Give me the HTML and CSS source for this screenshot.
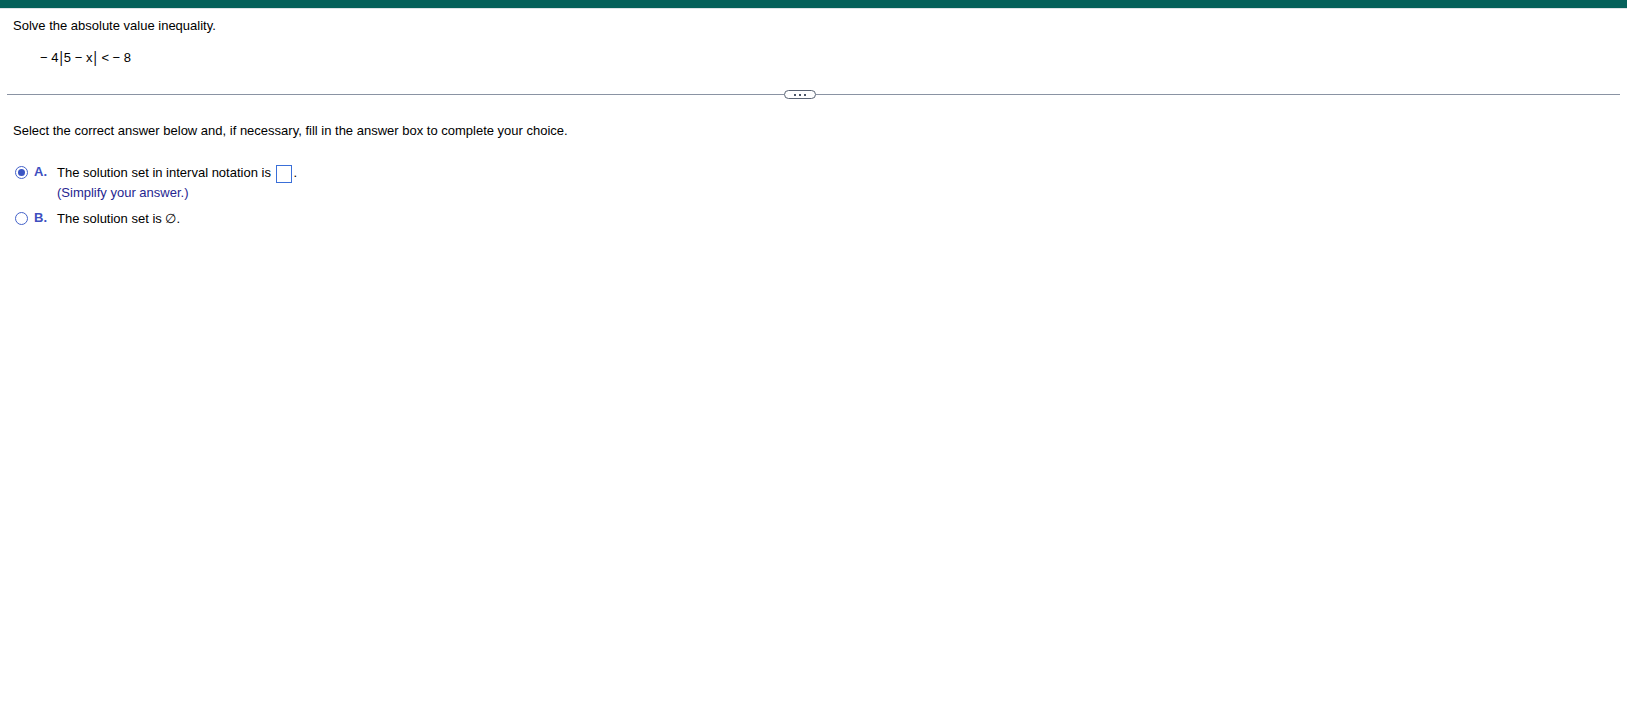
FILE: index.html
```html
<!DOCTYPE html>
<html>
<head>
<meta charset="utf-8">
<link rel="stylesheet" href="styles.css">
</head>
<body>
<div class="topbar"></div>
<div class="question">
  <div class="prompt">Solve the absolute value inequality.</div>
  <div class="equation"><span class="op">−</span> 4<span class="bar">|</span>5 <span class="op">−</span> x<span class="bar">|</span> &lt; <span class="op">−</span> 8</div>
</div>
<div class="divider">
  <span class="rule rule-left"></span>
  <button class="pill" aria-label="more"><span class="dot"></span><span class="dot"></span><span class="dot"></span></button>
  <span class="rule"></span>
</div>
<div class="answer">
  <div class="instructions">Select the correct answer below and, if necessary, fill in the answer box to complete your choice.</div>
  <div class="options">
    <div class="option">
      <span class="radio checked"></span>
      <span class="letter">A.</span>
      <div class="body">
        <div class="line">The solution set in interval notation is <span class="box"></span>.</div>
        <div class="hint">(Simplify your answer.)</div>
      </div>
    </div>
    <div class="option">
      <span class="radio"></span>
      <span class="letter">B.</span>
      <div class="body">
        <div class="line">The solution set is ∅.</div>
      </div>
    </div>
  </div>
</div>
</body>
</html>
```
FILE: styles.css
```css
html, body {
  margin: 0;
  padding: 0;
  background: #ffffff;
}
body {
  font-family: "Liberation Sans", Arial, sans-serif;
  font-size: 13px;
  color: #000000;
}
.topbar {
  height: 8px;
  background: #05605a;
  border-bottom: 1px solid #dfe3e6;
}
.question {
  padding: 9px 13px 0 13px;
}
.prompt {
  line-height: 16px;
}
.equation {
  margin-top: 16px;
  padding-left: 27px;
  line-height: 16px;
}
.equation .bar {
  display: inline-block;
  margin: 0 1px;
  transform: scaleY(1.3);
}
.divider {
  display: flex;
  align-items: center;
  margin: 24px 7px 0 7px;
}
.rule {
  flex: 1;
  height: 1px;
  background: #8a93a3;
}
.rule-left {
  flex: 0 0 777px;
}
.pill {
  width: 32px;
  height: 9px;
  border: 1px solid #5a6475;
  border-radius: 5px;
  background: #fff;
  padding: 0;
  display: flex;
  align-items: center;
  justify-content: center;
  gap: 3px;
  box-sizing: border-box;
}
.dot {
  width: 2px;
  height: 2px;
  background: #4a5466;
}
.answer {
  padding: 24px 13px 0 13px;
}
.instructions {
  line-height: 16px;
}
.options {
  margin-top: 24px;
  display: flex;
  flex-direction: column;
  gap: 7px;
}
.option {
  display: flex;
  align-items: flex-start;
}
.radio {
  width: 13px;
  height: 13px;
  border: 1px solid #4462c9;
  border-radius: 50%;
  box-sizing: border-box;
  margin: 3px 0 0 2px;
  display: flex;
  align-items: center;
  justify-content: center;
}
.radio.checked::after {
  content: "";
  width: 7px;
  height: 7px;
  border-radius: 50%;
  background: #3a55c4;
}
.letter {
  color: #3e4fbf;
  font-weight: bold;
  margin-left: 6px;
  width: 23px;
  line-height: 18px;
}
.body .line {
  line-height: 19px;
}
.box {
  display: inline-block;
  width: 16px;
  height: 18px;
  margin-left: 1px;
  margin-right: 2px;
  border: 1px solid #3a6fd8;
  box-sizing: border-box;
  vertical-align: middle;
}
.hint {
  color: #262690;
  line-height: 19px;
}
```
